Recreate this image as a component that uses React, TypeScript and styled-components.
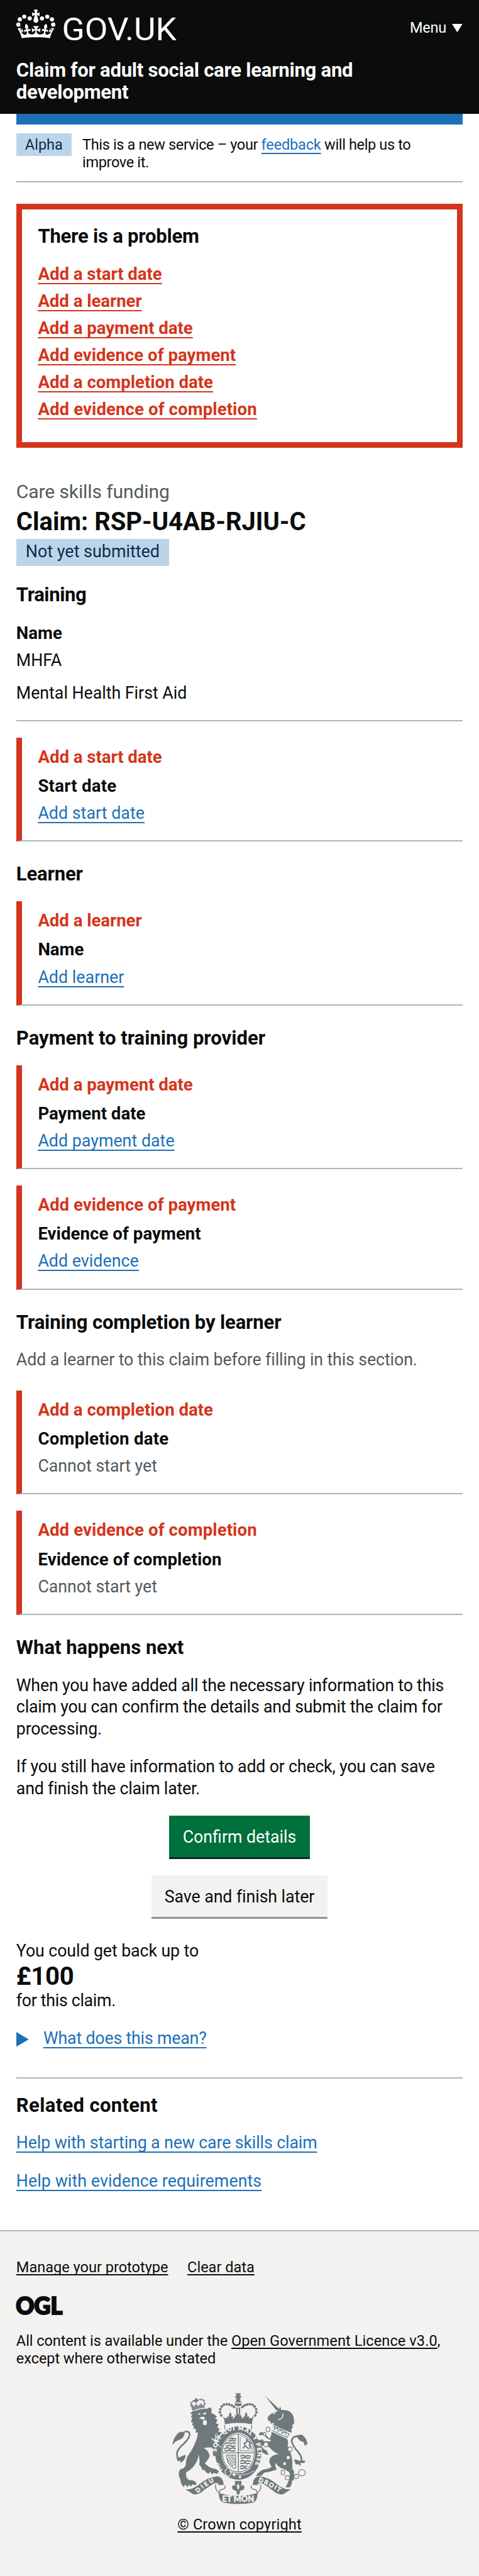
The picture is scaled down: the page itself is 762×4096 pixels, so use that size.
import React from "react";
import styled, { createGlobalStyle, css } from "styled-components";

const K = 4096 / 4750;
const u = (n: number) => `${+(n * K).toFixed(3)}px`;

const c = {
  text: "#0b0c0c",
  secondary: "#505a5f",
  blue: "#1d70b8",
  red: "#d4351c",
  border: "#b1b4b6",
  tag: "#bbd4ea",
  tagText: "#0c2d4a",
  grey: "#f3f2f1",
  green: "#00703c",
  crest: "#6f797c",
};

const GlobalStyle = createGlobalStyle`
  *, *::before, *::after { box-sizing: border-box; }
  body {
    margin: 0;
    background: #fff;
    color: ${c.text};
    font-family: Roboto, "Liberation Sans", sans-serif;
    -webkit-font-smoothing: antialiased;
  }
`;

interface TextProps {
  $track?: number;
  $gap?: number;
}

const spacing = css<TextProps>`
  letter-spacing: ${(p) => u(p.$track ?? 0)};
  margin: ${(p) => u(p.$gap ?? 0)} 0 0;
`;

const Body = styled.p<TextProps>`
  ${spacing}
  font-size: ${u(31)};
  line-height: ${u(40)};
`;

const Muted = styled(Body)`
  color: ${c.secondary};
`;

const Strong = styled.p<TextProps>`
  ${spacing}
  font-size: ${u(32)};
  font-weight: 700;
  line-height: ${u(40)};
`;

const ErrorText = styled(Strong)`
  color: ${c.red};
`;

const Heading = styled.h2<TextProps>`
  ${spacing}
  font-size: ${u(36)};
  font-weight: 700;
  line-height: ${u(40)};
`;

const Small = styled.p<TextProps>`
  ${spacing}
  font-size: ${u(27.3)};
  line-height: ${u(32)};
`;

const Link = styled.a<{ $tone?: string; $drop?: number; $track?: number }>`
  color: ${(p) => p.$tone ?? c.blue};
  ${(p) => p.$track !== undefined && `letter-spacing: ${u(p.$track)};`}
  text-decoration: underline;
  text-decoration-thickness: ${u(2)};
  text-underline-offset: ${(p) => u(p.$drop ?? 6)};
  text-decoration-skip-ink: none;
`;

const Page = styled.div`
  width: 762px;
  height: ${u(4750)};
  display: flex;
  flex-direction: column;
`;

const Header = styled.header`
  height: ${u(210)};
  padding: ${u(17)} ${u(30)} 0;
  background: ${c.text};
  color: #fff;
`;

const HeaderRow = styled.div`
  display: flex;
  justify-content: space-between;
  align-items: flex-start;
  height: ${u(93.4)};
`;

const LogoSvg = styled.svg`
  display: block;
  width: ${u(296)};
  height: ${u(60)};
  overflow: visible;
`;

const MenuButton = styled.button`
  display: flex;
  align-items: flex-start;
  gap: ${u(11)};
  padding: ${u(18.6)} 0 0;
  border: 0;
  background: none;
  color: #fff;
  font: inherit;
  font-size: ${u(27.3)};
  line-height: ${u(32)};
  letter-spacing: ${u(-0.3)};
`;

const MenuArrow = styled.svg`
  width: ${u(19.5)};
  height: ${u(15.5)};
  margin-top: ${u(8.5)};
`;

const ServiceName = styled(Heading)`
  max-width: ${u(780)};
`;

const Container = styled.main`
  padding: 0 ${u(30)};
`;

const BlueBar = styled.div`
  height: ${u(20)};
  background: ${c.blue};
`;

const PhaseBanner = styled.div`
  display: flex;
  align-items: flex-start;
  height: ${u(106)};
  padding-top: ${u(16)};
  border-bottom: 2px solid ${c.border};
`;

const PhaseTag = styled.strong`
  flex: none;
  width: ${u(102)};
  height: ${u(42)};
  padding-top: ${u(5.6)};
  background: ${c.tag};
  color: ${c.tagText};
  font-size: ${u(27.3)};
  font-weight: 400;
  line-height: ${u(32)};
  text-align: center;
`;

const PhaseText = styled(Small)`
  margin: ${u(5.6)} 0 0 ${u(20)};
  max-width: ${u(640)};
`;

const ErrorSummary = styled.section`
  height: ${u(450)};
  margin-top: ${u(40)};
  padding: ${u(30.2)} ${u(29.6)} 0;
  border: 9px solid ${c.red};
`;

const ErrorList = styled.ul`
  display: flex;
  flex-direction: column;
  gap: ${u(10)};
  margin: ${u(29.1)} 0 0;
  padding: 0;
  list-style: none;
`;

const Caption = styled.p`
  margin: ${u(60.7)} 0 0;
  color: ${c.secondary};
  font-size: ${u(34.8)};
  line-height: ${u(40)};
  letter-spacing: ${u(-0.12)};
`;

const ClaimTitle = styled.h1`
  margin: ${u(10.7)} 0 0;
  font-size: ${u(46.3)};
  font-weight: 700;
  line-height: ${u(50)};
`;

const StatusTag = styled.strong`
  display: block;
  width: ${u(282)};
  height: ${u(50)};
  margin-top: ${u(6.6)};
  padding: ${u(3.6)} 0 0;
  background: ${c.tag};
  color: ${c.tagText};
  font-size: ${u(31.2)};
  font-weight: 400;
  line-height: ${u(40)};
  text-align: center;
`;

const Rule = styled.hr<{ $top: number }>`
  height: 2px;
  margin: ${(p) => u(p.$top)} 0 0;
  border: 0;
  background: ${c.border};
`;

const Task = styled.section<{ $gap: number }>`
  height: ${u(192)};
  margin-top: ${(p) => u(p.$gap)};
  padding: ${u(16.4)} 0 0 ${u(29.6)};
  border-left: 9px solid ${c.red};
  border-bottom: 2px solid ${c.border};
`;

const Actions = styled.div`
  display: flex;
  flex-direction: column;
  align-items: center;
  gap: ${u(30)};
  margin-top: ${u(30)};
`;

const Button = styled.button<{ $secondary?: boolean }>`
  width: ${(p) => u(p.$secondary ? 324 : 260)};
  height: ${u(80)};
  padding: ${u(20)} 0 0;
  display: flex;
  justify-content: center;
  align-items: flex-start;
  border: 0;
  border-bottom: ${u(4)} solid ${(p) => (p.$secondary ? "#929191" : "#002d18")};
  background: ${(p) => (p.$secondary ? c.grey : c.green)};
  color: ${(p) => (p.$secondary ? c.text : "#fff")};
  font: inherit;
  font-size: ${u(31)};
  line-height: ${u(40)};
  letter-spacing: ${(p) => u(p.$secondary ? -0.08 : 0)};
`;

const Amount = styled.p`
  margin: ${u(1.2)} 0 0;
  font-size: ${u(46.5)};
  font-weight: 700;
  line-height: ${u(50)};
  letter-spacing: ${u(-0.4)};
`;

const Details = styled.div`
  display: flex;
  align-items: flex-start;
  gap: ${u(27)};
  margin-top: ${u(29.5)};
`;

const DetailsArrow = styled.svg`
  width: ${u(23)};
  height: ${u(27)};
  margin-top: ${u(7.7)};
`;

const Footer = styled.footer`
  flex: 1;
  margin-top: ${u(69.8)};
  padding: ${u(51.5)} ${u(30)} 0;
  border-top: 2px solid ${c.border};
  background: ${c.grey};
`;

const FooterLinks = styled.nav`
  display: flex;
  gap: ${u(35.5)};
`;

const OglSvg = styled.svg`
  display: block;
  width: ${u(82)};
  height: ${u(33.3)};
  margin-top: ${u(38.8)};
  overflow: visible;
`;

const Copyright = styled.div`
  display: flex;
  flex-direction: column;
  align-items: center;
`;

const CrestSvg = styled.svg`
  display: block;
  width: ${u(250)};
  height: ${u(205)};
  margin: ${u(47.4)} 0 0 ${u(2)};
`;

const FONT = 'Roboto, "Liberation Sans", sans-serif';

const Logo = () => (
  <LogoSvg viewBox="90 51 888 180" aria-label="GOV.UK">
    <g fill="#fff">
      {[
        [101, 135], [109, 106], [134, 91], [164, 101],
        [232, 101], [261, 91], [287, 106], [294, 135],
      ].map(([x, y]) => (
        <circle key={x} cx={x} cy={y} r="11.5" />
      ))}
      <path
        transform="translate(98.8 52) scale(6.2)"
        d="M17 4.7l2.3 1.2V2.5l-2.3.7-.2-.2.9-3h-3.4l.9 3-.2.2c-.1.1-2.3-.7-2.3-.7v3.4L15 4.7c.1.1.1.2.2.2l-1.3 4c-.1.2-.1.4-.1.6 0 1.1.8 2 1.9 2.2h.7c1-.2 1.9-1.1 1.9-2.1 0-.2 0-.4-.1-.6l-1.3-4c-.1-.2 0-.2.1-.3"
      />
      <path
        transform="translate(96.4 30) scale(6.35 6)"
        d="M16 29.2c4.4 0 8.6.3 12.3.8 1.1-4.5 2.4-7 3.7-8.8l-2.5-.9c.2 1.3.3 1.9 0 2.7-.4-.4-.8-1.1-1.1-2.3l-1.2 4c.7-.5 1.3-.8 2-.9-1.1 2.5-2.6 3.1-3.5 3-1.1-.2-1.7-1.2-1.5-2.1.3-1.2 1.5-1.5 2.1-.1 1.1-2.3-.8-3-2-2.3 1.9-1.9 2.1-3.5.6-5.6-2.1 1.6-2.1 3.2-1.2 5.5-1.2-1.4-3.2-.6-2.5 1.6.9-1.4 2.1-.5 1.9.8-.2 1.1-1.7 2.1-3.5 1.9-2.7-.2-2.9-2.1-2.9-3.6.7-.1 1.9.5 2.9 1.9l.4-4.3c-1.1 1.1-2.1 1.4-3.2 1.4.4-1.2 2.1-3 2.1-3h-5.4s1.7 1.9 2.1 3c-1.1 0-2.1-.2-3.2-1.4l.4 4.3c1-1.4 2.2-2 2.9-1.9-.1 1.5-.2 3.4-2.9 3.6-1.9.2-3.4-.8-3.5-1.9-.2-1.3 1-2.2 1.9-.8.7-2.3-1.2-3-2.5-1.6.9-2.2.9-3.9-1.2-5.5-1.5 2-1.3 3.7.6 5.6-1.2-.7-3.1 0-2 2.3.6-1.4 1.8-1.1 2.1.1.2.9-.3 1.9-1.5 2.1-.9.2-2.4-.5-3.5-3 .6 0 1.2.3 2 .9l-1.2-4c-.3 1.1-.7 1.9-1.1 2.3-.3-.8-.2-1.4 0-2.7L0 21.2C1.3 23 2.6 25.5 3.7 30c3.7-.5 7.9-.8 12.3-.8"
      />
      <text x="342" y="222" fontFamily={FONT} fontSize="176" textLength="635" lengthAdjust="spacingAndGlyphs">
        GOV.UK
      </text>
    </g>
  </LogoSvg>
);

const Ogl = () => (
  <OglSvg viewBox="0 0 82 33.3" aria-label="Open Government Licence">
    <g
      fill={c.text}
      stroke={c.text}
      strokeWidth="2.6"
      fontFamily='Lato, "Liberation Sans", sans-serif'
      fontWeight="900"
      fontSize="43"
    >
      <text x="-1" y="31.8" textLength="86" lengthAdjust="spacingAndGlyphs">OGL</text>
    </g>
  </OglSvg>
);

const crownBeads = [
  [326, 194], [319, 177], [321, 160], [329, 145], [341, 135], [356, 132], [371, 134], [385, 139], [397, 147],
];

const Crest = () => (
  <CrestSvg viewBox="55 70 750 615" aria-label="Royal coat of arms">
    <g fill={c.crest}>
      {/* imperial crown */}
      <path d="M404 72h32l-9 12 9 0v12h-9l9 10h-32l9-10h-9v-12h9zM413 106h14l12 16h-38zM399 127h42q-4 17-21 17t-21-17zM409 150h8v32h-8zM423 150h8v32h-8zM406 184h28l-8 13 12-6v22h-36v-22l12 6z" />
      {crownBeads.map(([x, y]) => (
        <g key={x}>
          <circle cx={x} cy={y} r="7.5" />
          <circle cx={840 - x} cy={y} r="7.5" />
        </g>
      ))}
      <path d="M331 197l16 12q6 3 10-4l8 10q-8-12-3-18l8 6q-4-14 6-28 10 14 6 28l8-6q5 6-3 18l16-12h34l16 12q-8-12-3-18l8 6q-4-14 6-28 10 14 6 28l8-6q5 6-3 18l8-10q4 7 10 4l16-12q-14 24-12 46-75-16-150 0-2-22-12-46z" />
      <path d="M348 247q-8 12 2 24M492 247q8 12-2 24" fill="none" stroke={c.crest} strokeWidth="4" />

      {/* lion */}
      <path d="M168 170L154 184l12 4-8 16 8 2-8 26 10 0-2 20 10-2-4 18 14 0-2 22 14-2Q195 320 180 350 165 385 150 405 130 430 130 465 128 487 100 492 88 505 92 530l8 18q0 22 18 42l10-14 10 16 10-14 12 10 5-12 20 4 5-10Q178 550 150 552 128 545 132 508 170 490 190 450 202 425 200 410q10 30 4 58 16 12 18 32l10-6q10 20 24 22l9-10 10 14 10-9 15 7 15-13Q305 490 285 488 260 485 235 460 262 430 262 415 255 385 228 375 260 368 275 372 280 400 282 420l10-4 8 14 10-14 12 10 6-16-2-25Q318 362 300 345l-30-24q22 4 30 12 15-30 30-46l-20-2 7-18-12-4 6-22-14-2 8-22-14-6 12-10-17-14-14-6 0-26-10-6-12 8Q215 155 185 168z" />
      <path d="M155 132l11 34 8 2q26-14 60-16l2-32-12 20-12-14-12 16-16-14-4 18-14-12z" opacity=".85" />
      {[[159, 135], [161, 124], [171, 116], [183, 114], [197, 110], [210, 106], [222, 107], [231, 114], [235, 127]].map(([x, y]) => (
        <circle key={x} cx={x} cy={y} r="5" />
      ))}
      <path d="M181 100l10-2 0 8 8-1 1 8-8 2 1 9-9 2-2-9-8 1-1-8 8-2z" />
      <path d="M122 285q34-8 28 22-8 26-45 56-32 32-22 60 6 12 26 4" fill="none" stroke={c.crest} strokeWidth="9" />
      <path d="M55 360q4-40 34-70 24-12 36 0-4 32-34 40-24 10-36 30zM68 428q22 8 38-8l24-8q-4 30-20 38l-12 6 2-12-18 4 2-10z" />

      {/* unicorn */}
      <path d="M569 86l64 82 16-7z" />
      <path d="M652 144l6 20q28-2 46 8 22 16 24 40l2 28-10 6 2 16-8 6 2 22-14-4L610 248l10-14-20 6-3-14-12-4-2-16q14-26 46-30l16-12z" />
      <path d="M604 282l88 44q8 20 2 36 24 50 26 90l0 38 9 12 0 46-12 10q2 20-12 34l-24 0q12-16 16-32 10-18 8-48-20-20-48-26-24-16-30-30-6 20 8 36-30 14-70 18l-18 18-28 0q20-32 50-36 28-4 36-14-14-18-12-38 8-28 50-32-30-12-50-38-22-8-46-10l14 20 16 8 12 26-20-6-14-8-22-30-6-36 26-8 8 10 30 2q12 0 10-8-22-4-30-18l-6-12-20 4-13-4 12-14 16 4 20 18 12 16q6-6 12-24z" />
      <path d="M792 360q-4-34-30-52-44-2-46 30 6 26 34 56 26 32 20 52-10 8-36-6" fill="none" stroke={c.crest} strokeWidth="9" />
      <path d="M804 360q-2-40-32-60-26 2-28 10 12 26 34 30 16 6 26 20zM728 440q20 14 40 4l24 0-6 14-20-2 0 18-14-10-12 2z" />

      {/* garter */}
      <ellipse cx="421" cy="402" rx="128" ry="148" />
    </g>

    <g fill={c.grey}>
      <ellipse cx="421" cy="402" rx="93" ry="112" />
      <path d="M197 181l18 4-14 6zM222 184l22-8-6 16zM203 212q10-14 28-10 8 8 0 14l-10 2-6-6z" />
      <ellipse cx="236" cy="234" rx="11" ry="14" />
      <path d="M612 182l16-2-8 8zM606 250l8-6 92 50-16 28-86-38z" />
      <circle cx="697" cy="427" r="9" />
      <circle cx="677" cy="461" r="8" />
      <circle cx="397" cy="522" r="8" />
      <circle cx="430" cy="534" r="7" />
    </g>
    <path d="M640 218q32-4 28-36" fill="none" stroke={c.grey} strokeWidth="5" />
    <path d="M272 320l54 52M300 292q-10 24-6 44" fill="none" stroke={c.grey} strokeWidth="4" />
    <path d="M440 514l50-28M360 490q60 60 150 10" fill="none" stroke={c.grey} strokeWidth="3" />

    <g fill="none" stroke={c.crest} strokeWidth="4">
      <path d="M612 250l90 46-12 22M620 252l0 18 16-8 4 20 18-8 4 20 18-8 6 22" />
      <path d="M606 276l84 42" />
      <ellipse cx="585" cy="272" rx="11" ry="13" fill={c.grey} />
      <ellipse cx="566" cy="297" rx="7" ry="9" fill={c.grey} />
      <ellipse cx="574" cy="355" rx="13" ry="13" fill={c.grey} />
      <circle cx="707" cy="381" r="12" fill={c.grey} />
      <ellipse cx="668" cy="510" rx="10" ry="14" />
      <ellipse cx="693" cy="539" rx="13" ry="11" />
      <ellipse cx="742" cy="532" rx="12" ry="12" />
      <circle cx="773" cy="511" r="18" />
      {/* quartered shield */}
      <ellipse cx="421" cy="402" rx="88" ry="105" />
      <path d="M333 401h176M421 297v210" strokeWidth="5" />
      <path d="M431 310v80h70M436 306q50 20 62 78" strokeWidth="3" />
      <path d="M355 414h50l2 72q-14 4-22-8-28-20-30-64zM364 420l38 50M376 418l28 38M388 418l16 22M360 434l34 42" strokeWidth="4" />
      <path
        d="M372 326l14-8 8 6 16-2M366 334l12 2 10-6 8 6 12-2M350 352l14-8 14 6 18-4 10 4M352 362l10 2 14-4 12 6 18-4M342 380l16-8 16 6 18-4 14 4M344 390l14 0 14-4 14 6 18-4M432 420l14-6 12 6 18-4 14 4M434 430l12 0 14-4 12 6 16-4M430 450l14-8 14 6 16-4 16 4M432 460l12 0 12-4 14 6 14-4M430 478l14-6 12 6 14-4M432 488l14 0 10-4 8 4"
        strokeWidth="7"
      />
      <path d="M446 376l14-14-8-14 14-6 2-16 10 14 12 6-8 12 8 20M462 366l18 14" strokeWidth="7" />
    </g>

    <g fill={c.crest}>
      {/* buckle and pendant */}
      <path d="M346 502l18-18 14 8-4 12 10 8-14 20-18-8z" stroke={c.grey} strokeWidth="4" />
      <path d="M402 556h36v20l-8 10q16-14 24 2 2 14-12 20l-14 4 2 12-10 10-10-10 2-12-14-4q-14-6-12-20 8-16 24-2l-8-10z" />
      <path d="M420 570q12 18 2 34h-4q-10-16 2-34z" fill={c.grey} />

      {/* motto ribbon */}
      <path d="M128 603q30 4 66-20 60-50 110-52 32 2 36 48l-28 0q-8-20-30-6-40 24-68 48-20 14-44 8-18-12-42-26z" />
      <path d="M712 603q-30 4-66-20-60-50-110-52-32 2-36 48l28 0q8-20 30-6 40 24 68 48 20 14 44 8 18-12 42-26z" />
      <path d="M312 622q108 34 216 0-2 46-24 54-84 16-168 0-22-8-24-54z" />
      <path d="M296 576q-8 26 20 48M348 582q4 20-20 22-14 4-14 22M544 576q8 26-20 48M492 582q-4 20 20 22 14 4 14 22" fill="none" stroke={c.crest} strokeWidth="5" />
    </g>

    <defs>
      <path id="garter-path" d="M350 508A107 126 0 0 1 421 276A107 126 0 0 1 478 508" />
      <path id="ribbon-left" d="M196 624Q256 570 300 556" />
      <path id="ribbon-right" d="M530 560Q590 580 650 622" />
    </defs>
    <g
      fill={c.grey}
      stroke={c.grey}
      strokeWidth="1.6"
      fontFamily='Lato, "Liberation Sans", sans-serif'
      fontWeight="900"
      fontSize="34"
    >
      <text fontSize="32">
        <textPath href="#garter-path" startOffset="20">HO</textPath>
      </text>
      <text fontSize="32">
        <textPath href="#garter-path" startOffset="128" textLength="440">SOIT QUI MAL Y PENSE</textPath>
      </text>
      <text>
        <textPath href="#ribbon-left" textLength="112">DIEU</textPath>
      </text>
      <text>
        <textPath href="#ribbon-right" textLength="132">DROIT</textPath>
      </text>
      <text x="332" y="672" fontSize="44" textLength="176" lengthAdjust="spacingAndGlyphs">ET MON</text>
    </g>
  </CrestSvg>
);

const errors: [string, number][] = [
  ["Add a start date", -0.03],
  ["Add a learner", -0.04],
  ["Add a payment date", -0.04],
  ["Add evidence of payment", 0.03],
  ["Add a completion date", 0],
  ["Add evidence of completion", 0.11],
];

interface TaskItemProps {
  error: string;
  label: string;
  action?: string;
  gap?: number;
  labelTrack?: number;
}

const TaskItem = ({ error, label, action, gap = 29.3, labelTrack = 0 }: TaskItemProps) => (
  <Task $gap={gap}>
    <ErrorText $track={errors.find(([name]) => name === error)?.[1]}>{error}</ErrorText>
    <Strong $gap={13.6} $track={labelTrack}>{label}</Strong>
    {action ? (
      <Body $gap={10} $track={0.06}>
        <Link href="#">{action}</Link>
      </Body>
    ) : (
      <Muted $gap={10}>Cannot start yet</Muted>
    )}
  </Task>
);

export default function App() {
  return (
    <>
      <GlobalStyle />
      <Page>
        <Header>
          <HeaderRow>
            <Logo />
            <MenuButton>
              Menu
              <MenuArrow viewBox="0 0 20 16">
                <path d="M0 0h20L10 16z" fill="#fff" />
              </MenuArrow>
            </MenuButton>
          </HeaderRow>
          <ServiceName as="p" $track={-0.28}>
            Claim for adult social care learning and development
          </ServiceName>
        </Header>

        <Container>
          <BlueBar />
          <PhaseBanner>
            <PhaseTag>Alpha</PhaseTag>
            <PhaseText $track={-0.42}>
              This is a new service – your <Link href="#" $track={-0.2}>feedback</Link> will help us to improve it.
            </PhaseText>
          </PhaseBanner>

          <ErrorSummary>
            <Heading $track={-0.25}>There is a problem</Heading>
            <ErrorList>
              {errors.map(([label, track]) => (
                <Strong as="li" key={label} $track={track}>
                  <Link href="#" $tone={c.red}>{label}</Link>
                </Strong>
              ))}
            </ErrorList>
          </ErrorSummary>

          <Caption>Care skills funding</Caption>
          <ClaimTitle>Claim: RSP-U4AB-RJIU-C</ClaimTitle>
          <StatusTag>Not yet submitted</StatusTag>

          <Heading $gap={34} $track={-0.45}>Training</Heading>
          <Strong $gap={29.8}>Name</Strong>
          <Body $gap={10.3}>MHFA</Body>
          <Body $gap={20}>Mental Health First Aid</Body>
          <Rule $top={29.9} />
          <TaskItem gap={29.7} error="Add a start date" label="Start date" labelTrack={0.3} action="Add start date" />

          <Heading $gap={40.7} $track={-0.2}>Learner</Heading>
          <TaskItem error="Add a learner" label="Name" action="Add learner" />

          <Heading $gap={40.7}>Payment to training provider</Heading>
          <TaskItem error="Add a payment date" label="Payment date" action="Add payment date" />
          <TaskItem gap={30} error="Add evidence of payment" label="Evidence of payment" labelTrack={0.07} action="Add evidence" />

          <Heading $gap={40.7} $track={-0.16}>Training completion by learner</Heading>
          <Muted $gap={29.1} $track={-0.12}>Add a learner to this claim before filling in this section.</Muted>
          <TaskItem gap={36.2} error="Add a completion date" label="Completion date" labelTrack={0.3} />
          <TaskItem gap={30} error="Add evidence of completion" label="Evidence of completion" labelTrack={0.12} />

          <Heading $gap={40.7}>What happens next</Heading>
          <Body $gap={29.3} $track={-0.22}>
            When you have added all the necessary information to this claim you can confirm the details and submit the claim for processing.
          </Body>
          <Body $gap={30} $track={-0.22}>
            If you still have information to add or check, you can save and finish the claim later.
          </Body>
          <Actions>
            <Button>Confirm details</Button>
            <Button $secondary>Save and finish later</Button>
          </Actions>

          <Body $gap={40.1} $track={-0.1}>You could get back up to</Body>
          <Amount>£100</Amount>
          <Body $gap={0.3} $track={-0.35}>for this claim.</Body>
          <Details>
            <DetailsArrow viewBox="0 0 23 27">
              <path d="M0 0l23 13.5L0 27z" fill={c.blue} />
            </DetailsArrow>
            <Body $track={-0.2}>
              <Link href="#">What does this mean?</Link>
            </Body>
          </Details>
          <Rule $top={50.9} />

          <Heading $gap={30.2} $track={0.38}>Related content</Heading>
          <Body $gap={29.2} $track={-0.135}>
            <Link href="#">Help with starting a new care skills claim</Link>
          </Body>
          <Body $gap={30.5} $track={0.108}>
            <Link href="#">Help with evidence requirements</Link>
          </Body>
        </Container>

        <Footer>
          <FooterLinks>
            <Small><Link href="#" $tone={c.text} $drop={4}>Manage your prototype</Link></Small>
            <Small><Link href="#" $tone={c.text} $drop={4}>Clear data</Link></Small>
          </FooterLinks>
          <Ogl />
          <Small $gap={31.9} $track={-0.08}>
            All content is available under the{" "}
            <Link href="#" $tone={c.text} $drop={4} $track={0.11}>Open Government Licence v3.0</Link>, except where otherwise stated
          </Small>
          <Copyright>
            <Crest />
            <Small $gap={21.6} $track={0.18}>
              <Link href="#" $tone={c.text} $drop={4}>© Crown copyright</Link>
            </Small>
          </Copyright>
        </Footer>
      </Page>
    </>
  );
}
